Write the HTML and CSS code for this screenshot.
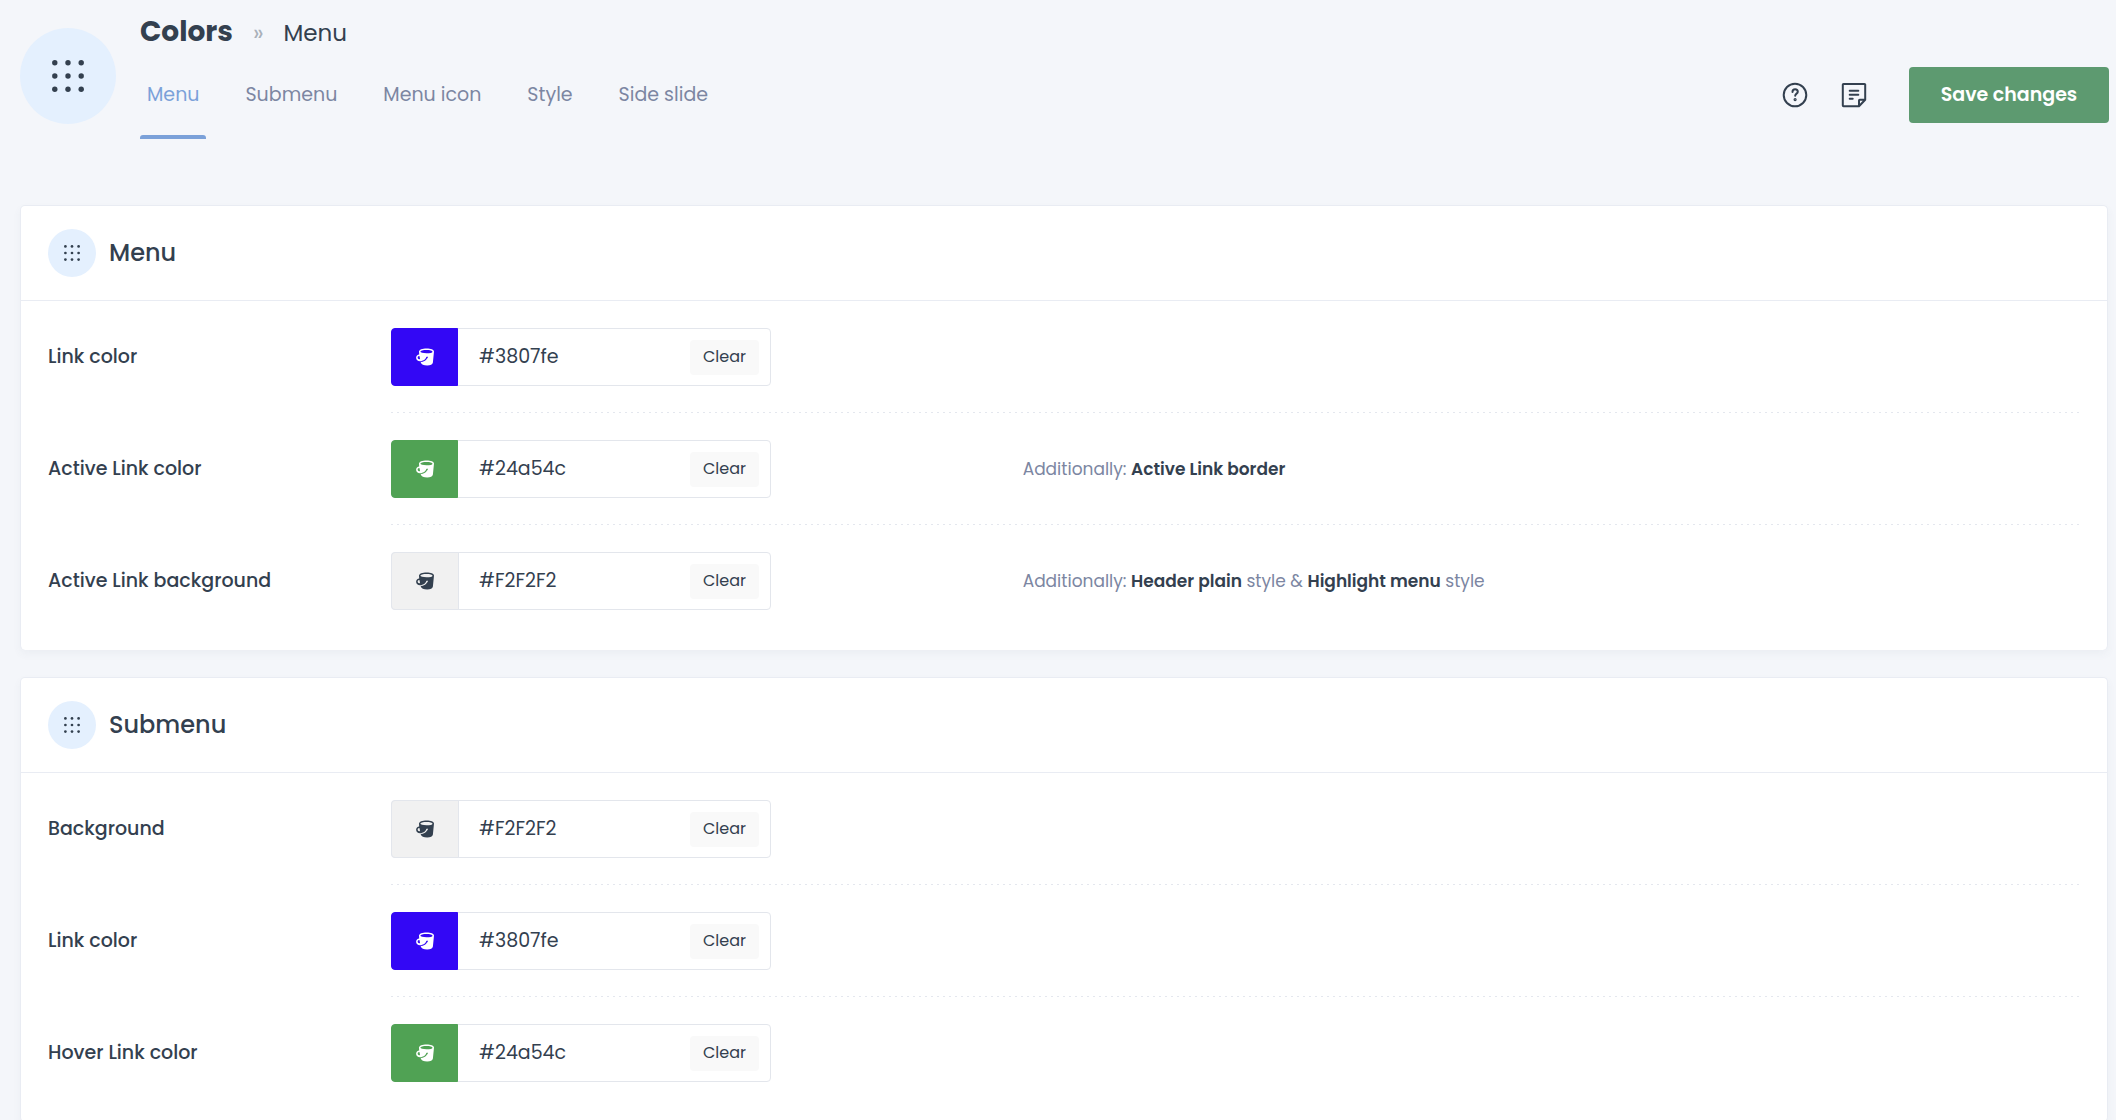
FILE: index.html
```html
<!DOCTYPE html>
<html lang="en">
<head>
<meta charset="utf-8">
<title>Colors - Menu</title>
<link rel="stylesheet" href="styles.css">
</head>
<body>
<svg class="sprite" aria-hidden="true">
  <symbol id="dots" viewBox="0 0 32 32">
    <circle cx="2.8" cy="2.8" r="2.7"/><circle cx="16" cy="2.8" r="2.7"/><circle cx="29.2" cy="2.8" r="2.7"/>
    <circle cx="2.8" cy="16" r="2.7"/><circle cx="16" cy="16" r="2.7"/><circle cx="29.2" cy="16" r="2.7"/>
    <circle cx="2.8" cy="29.2" r="2.7"/><circle cx="16" cy="29.2" r="2.7"/><circle cx="29.2" cy="29.2" r="2.7"/>
  </symbol>
  <symbol id="bucket" viewBox="0 0 18 18">
    <path fill-rule="evenodd" d="M3 3.800C3 1.700 6.300.5 10.600.5S18 1.600 18 3.600L16.900 14.600c-.2 1.900-2.500 2.900-5.700 2.900-3.500 0-6-1-6.400-3l-.1-.6c2.800 0 5.200-1.300 6.300-3.500a.9.9 0 1 0-.9-.6c-1.100 1.900-2.500 2.800-4.500 3.100C2.700 13.800.1 12.200.1 9.700.1 7.800 1.500 6.700 3.200 6.500zM4.400 3.600c0 1 2.600 1.700 6.100 1.700s6-.7 6-1.600-2.500-1.600-6-1.600-6.100.6-6.100 1.500zM2.800 8a1.700 1.700 0 0 0 .3 3.300c.5 0 .9-.2.9-.6L3.500 8.300C3.400 8.100 3.100 8 2.800 8z"/>
  </symbol>
</svg>

<header class="topbar">
  <span class="badge badge-large"><svg class="icon-large"><use href="#dots"/></svg></span>
  <div class="heading">
    <h1 class="crumbs"><strong class="crumb-root">Colors</strong><span class="crumb-sep">»</span><span>Menu</span></h1>
    <div class="toolbar">
      <nav class="tabs">
        <a class="tab tab-active" href="#menu">Menu</a>
        <a class="tab" href="#submenu">Submenu</a>
        <a class="tab" href="#menu-icon">Menu icon</a>
        <a class="tab" href="#style">Style</a>
        <a class="tab" href="#side-slide">Side slide</a>
      </nav>
      <div class="actions">
        <button class="icon-button" type="button" aria-label="Help">
          <svg viewBox="0 0 26 26"><circle cx="13" cy="13" r="11.300"/><path d="M10.500 9.900c0-1.700 1.200-2.700 2.600-2.700s2.700 1 2.700 2.500c0 1.900-2.600 2-2.600 4"/><circle cx="13.100" cy="17.600" r=".6"/></svg>
        </button>
        <button class="icon-button" type="button" aria-label="Notes">
          <svg viewBox="0 0 26 26"><path d="M2.500 1.900h21a.7.7 0 0 1 .7.700V17.800L18 24.200H2.500a.7.7 0 0 1-.7-.7V2.600a.7.7 0 0 1 .7-.7zM18 24V18.500a.7.7 0 0 1 .7-.7H24M8.700 8.700h8.600M8.700 12.700h8.600M8.700 16.700h3"/></svg>
        </button>
        <button class="save" type="button">Save changes</button>
      </div>
    </div>
  </div>
</header>

<main class="cards">
  <section class="card" id="menu">
    <h2 class="card-title"><span class="badge"><svg class="icon-small"><use href="#dots"/></svg></span>Menu</h2>
    <div class="rows">
      <div class="row">
        <label class="label" for="menu-link">Link color</label>
        <div class="field">
          <div class="picker"><button class="swatch violet" type="button" aria-label="Pick color"><svg><use href="#bucket"/></svg></button><input class="value" id="menu-link" type="text" value="#3807fe"><button class="clear" type="button">Clear</button></div>
        </div>
      </div>
      <div class="row">
        <label class="label" for="menu-active">Active Link color</label>
        <div class="field">
          <div class="picker"><button class="swatch green" type="button" aria-label="Pick color"><svg><use href="#bucket"/></svg></button><input class="value" id="menu-active" type="text" value="#24a54c"><button class="clear" type="button">Clear</button></div>
          <p class="note">Additionally: <strong>Active Link border</strong></p>
        </div>
      </div>
      <div class="row">
        <label class="label" for="menu-active-bg">Active Link background</label>
        <div class="field">
          <div class="picker"><button class="swatch" type="button" aria-label="Pick color"><svg><use href="#bucket"/></svg></button><input class="value" id="menu-active-bg" type="text" value="#F2F2F2"><button class="clear" type="button">Clear</button></div>
          <p class="note">Additionally: <strong>Header plain</strong> style &amp; <strong>Highlight menu</strong> style</p>
        </div>
      </div>
    </div>
  </section>

  <section class="card" id="submenu">
    <h2 class="card-title"><span class="badge"><svg class="icon-small"><use href="#dots"/></svg></span>Submenu</h2>
    <div class="rows">
      <div class="row">
        <label class="label" for="sub-bg">Background</label>
        <div class="field">
          <div class="picker"><button class="swatch" type="button" aria-label="Pick color"><svg><use href="#bucket"/></svg></button><input class="value" id="sub-bg" type="text" value="#F2F2F2"><button class="clear" type="button">Clear</button></div>
        </div>
      </div>
      <div class="row">
        <label class="label" for="sub-link">Link color</label>
        <div class="field">
          <div class="picker"><button class="swatch violet" type="button" aria-label="Pick color"><svg><use href="#bucket"/></svg></button><input class="value" id="sub-link" type="text" value="#3807fe"><button class="clear" type="button">Clear</button></div>
        </div>
      </div>
      <div class="row">
        <label class="label" for="sub-hover">Hover Link color</label>
        <div class="field">
          <div class="picker"><button class="swatch green" type="button" aria-label="Pick color"><svg><use href="#bucket"/></svg></button><input class="value" id="sub-hover" type="text" value="#24a54c"><button class="clear" type="button">Clear</button></div>
        </div>
      </div>
    </div>
  </section>
</main>
</body>
</html>
```

FILE: styles.css
```css
* { box-sizing: border-box; }

html { overflow: hidden; height: 100%; }

body {
  margin: 0;
  height: 100%;
  overflow: hidden;
  background: #f4f6fa;
  color: #33404f;
  font: 400 19px/28px Poppins, Inter, sans-serif;
}

button, input { font: inherit; color: inherit; border: 0; padding: 0; background: none; }
button { cursor: pointer; }
.sprite { display: none; }
svg { display: block; }
.badge svg, .swatch svg { fill: currentColor; }

.topbar { display: flex; gap: 24px; padding: 12px 7px 0 20px; }

.badge {
  display: grid;
  place-items: center;
  flex: none;
  width: 48px;
  height: 48px;
  border-radius: 50%;
  background: #e4f0fe;
}
.badge-large { width: 96px; height: 96px; margin-top: 16px; }
.icon-large { width: 32px; height: 32px; }
.icon-small { width: 16px; height: 16px; }

.heading { flex: 1; }
.crumbs {
  display: flex;
  align-items: baseline;
  height: 40px;
  margin: 0;
  font-size: 23px;
  line-height: 40px;
  font-weight: 400;
}
.crumb-root { font-size: 28px; font-weight: 700; line-height: 40px; }
.crumb-sep { margin: 0 20px; color: #a9b0b9; }

.toolbar { display: flex; justify-content: space-between; align-items: flex-start; }
.tabs { display: flex; gap: 32px; }
.tab {
  padding: 29px 7px 26px;
  border-bottom: 4px solid transparent;
  color: #7c86a2;
  text-decoration: none;
}
.tab-active { position: relative; color: #7ba1d9; }
.tab-active::after {
  content: "";
  position: absolute;
  left: 0;
  right: 0;
  bottom: -4px;
  height: 4px;
  border-radius: 3px 3px 0 0;
  background: #7ba1d9;
}

.actions { display: flex; align-items: center; margin-top: 15px; }
.icon-button { width: 26px; height: 26px; margin-right: 33px; }
.icon-button svg {
  width: 26px;
  height: 26px;
  fill: none;
  stroke: currentColor;
  stroke-width: 2;
  stroke-linecap: round;
  stroke-linejoin: round;
}
.save {
  width: 200px;
  height: 56px;
  margin-left: 9px;
  border-radius: 4px;
  background: #5d9a70;
  color: #fff;
  font-weight: 600;
}

.cards { display: grid; gap: 27px; padding: 66px 8px 28px 20px; }
.card {
  border: 1px solid #e9ecf3;
  border-bottom: 0;
  border-radius: 5px;
  background: #fff;
  box-shadow: 0 4px 8px rgba(70, 90, 120, 0.05);
}
.card-title {
  display: flex;
  align-items: center;
  gap: 13px;
  margin: 0;
  padding: 23px 27px;
  border-bottom: 1px solid #e9ecf3;
  font-size: 24px;
  font-weight: 500;
}
.rows { padding: 0 27px 13px; }
.row { display: grid; grid-template-columns: 343px 1fr; align-items: center; }
.label { font-weight: 500; }
.field {
  display: grid;
  grid-template-columns: 37.4% 1fr;
  align-items: center;
  padding: 27px 0;
  background: repeating-linear-gradient(90deg, #e4e7ee 0 2px, transparent 2px 6px) bottom / 100% 1px no-repeat;
}
.row:last-child .field { background: none; }

.picker {
  display: flex;
  align-items: center;
  width: 380px;
  height: 58px;
  padding-right: 11px;
  border: 1px solid #e3e6ec;
  border-radius: 4px;
}
.swatch {
  display: grid;
  place-items: center;
  flex: none;
  width: 68px;
  height: 58px;
  margin-left: -1px;
  border: 1px solid #e3e6ec;
  border-radius: 4px 0 0 4px;
  background: #f1f1f1;
}
.swatch svg { width: 18px; height: 18px; }
.violet, .green { width: 67px; margin-right: 1px; color: #fff; }
.violet { border-color: #3307f5; background: #3307f5; }
.green { border-color: #50a254; background: #50a254; }
.value { flex: 1; min-width: 0; height: 56px; padding: 0 20px 2px; outline: 0; }
.clear {
  width: 69px;
  height: 35px;
  border-radius: 4px;
  background: #f9f9f9;
  font-size: 16px;
}

.note { margin: 0; color: #7c86a2; font-size: 17px; }
.note strong { color: #33404f; font-weight: 600; }
```
